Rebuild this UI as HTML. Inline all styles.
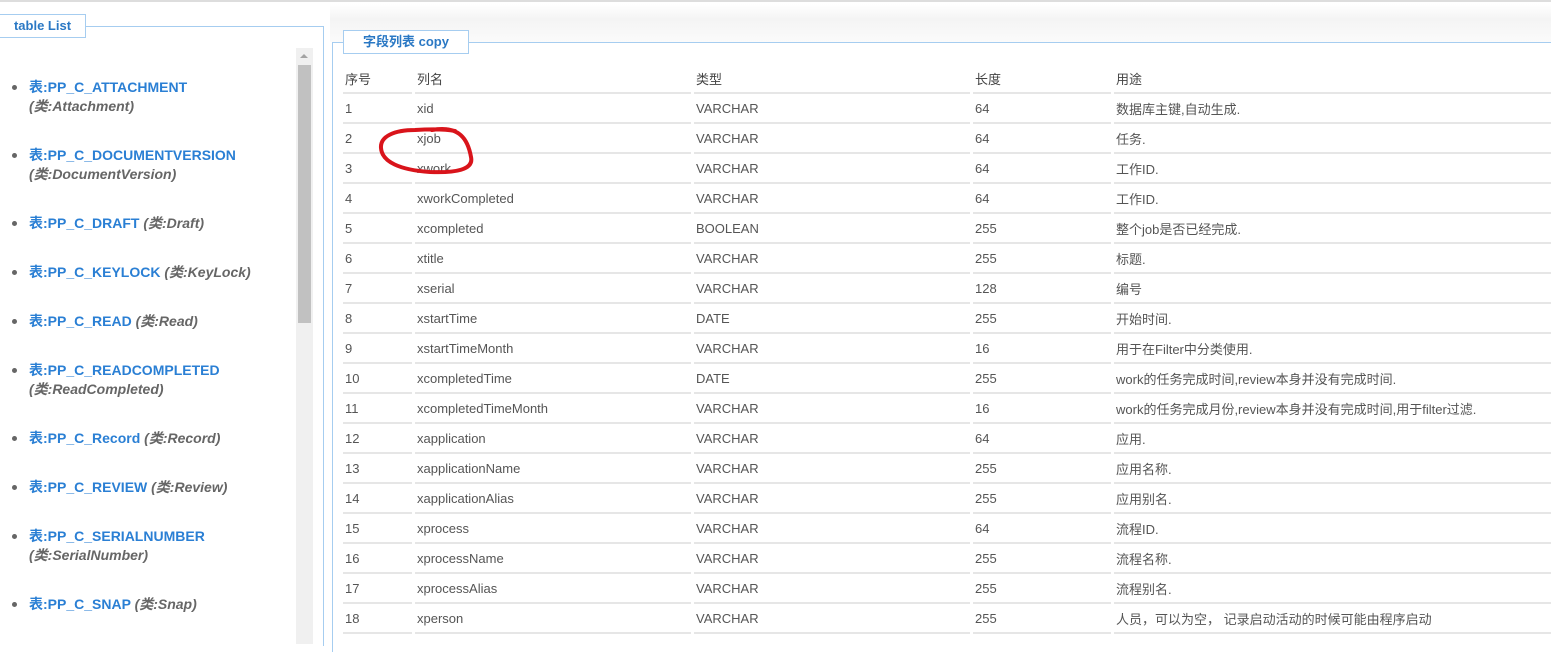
<!DOCTYPE html>
<html><head><meta charset="utf-8"><style>
*{margin:0;padding:0;box-sizing:border-box}
body{width:1551px;height:644px;overflow:hidden;background:#fff;position:relative;font-family:"Liberation Sans","Noto Sans CJK SC",sans-serif;color:#555}
.a{position:absolute}
.lg{position:absolute;border:1px solid #a6cdf0;background:#fff;color:#2a78c4;font-weight:bold;font-size:13px;text-align:center;line-height:21px}
.it{position:absolute;left:29px;font-size:14px;line-height:19px;font-weight:bold;color:#2a7fd4}
.it i{color:#666}
.it:before{content:"";position:absolute;left:-17px;top:7px;width:5px;height:5px;border-radius:50%;background:#666}
table{position:absolute;left:340px;top:64px;border-collapse:separate;border-spacing:3px 0;font-size:13px;color:#555;table-layout:fixed;width:1220px}
td{height:30px;border-bottom:2px solid #e6e6e6;padding-left:2px;white-space:nowrap;vertical-align:middle;overflow:hidden}
tr:first-child td{color:#444}
</style></head><body>
<div class="a" style="left:0;top:0;width:1551px;height:2px;background:#ddd"></div>
<div class="a" style="left:330px;top:4px;width:1221px;height:38px;background:linear-gradient(#fff,#f4f4f4 40%,#fbfbfb)"></div>
<div class="a" style="left:0;top:26px;width:324px;height:620px;border-top:1px solid #a6cdf0;border-right:1px solid #a6cdf0"></div>
<div class="lg" style="left:0;top:14px;width:86px;height:24px;border-left:none">table List</div>
<div class="a" style="left:296px;top:48px;width:17px;height:596px;background:#f0f0f0"></div>
<div class="a" style="left:298px;top:65px;width:13px;height:258px;background:#c1c1c1"></div>
<div class="a" style="left:300px;top:54px;width:0;height:0;border-left:4px solid transparent;border-right:4px solid transparent;border-bottom:4px solid #a3a3a3"></div>
<div class="it" style="top:78px">表:PP_C_ATTACHMENT<br><i>(类:Attachment)</i></div>
<div class="it" style="top:146px">表:PP_C_DOCUMENTVERSION<br><i>(类:DocumentVersion)</i></div>
<div class="it" style="top:214px">表:PP_C_DRAFT <i>(类:Draft)</i></div>
<div class="it" style="top:263px">表:PP_C_KEYLOCK <i>(类:KeyLock)</i></div>
<div class="it" style="top:312px">表:PP_C_READ <i>(类:Read)</i></div>
<div class="it" style="top:361px">表:PP_C_READCOMPLETED<br><i>(类:ReadCompleted)</i></div>
<div class="it" style="top:429px">表:PP_C_Record <i>(类:Record)</i></div>
<div class="it" style="top:478px">表:PP_C_REVIEW <i>(类:Review)</i></div>
<div class="it" style="top:527px">表:PP_C_SERIALNUMBER<br><i>(类:SerialNumber)</i></div>
<div class="it" style="top:595px">表:PP_C_SNAP <i>(类:Snap)</i></div>
<div class="a" style="left:332px;top:42px;width:1230px;height:610px;border-top:1px solid #a6cdf0;border-left:1px solid #a6cdf0"></div>
<div class="lg" style="left:343px;top:30px;width:126px;height:24px">字段列表 copy</div>
<table>
<colgroup><col style="width:69px"><col style="width:276px"><col style="width:276px"><col style="width:138px"><col style="width:446px"></colgroup>
<tr><td>序号</td><td>列名</td><td>类型</td><td>长度</td><td>用途</td></tr>
<tr><td>1</td><td>xid</td><td>VARCHAR</td><td>64</td><td>数据库主键,自动生成.</td></tr>
<tr><td>2</td><td>xjob</td><td>VARCHAR</td><td>64</td><td>任务.</td></tr>
<tr><td>3</td><td>xwork</td><td>VARCHAR</td><td>64</td><td>工作ID.</td></tr>
<tr><td>4</td><td>xworkCompleted</td><td>VARCHAR</td><td>64</td><td>工作ID.</td></tr>
<tr><td>5</td><td>xcompleted</td><td>BOOLEAN</td><td>255</td><td>整个job是否已经完成.</td></tr>
<tr><td>6</td><td>xtitle</td><td>VARCHAR</td><td>255</td><td>标题.</td></tr>
<tr><td>7</td><td>xserial</td><td>VARCHAR</td><td>128</td><td>编号</td></tr>
<tr><td>8</td><td>xstartTime</td><td>DATE</td><td>255</td><td>开始时间.</td></tr>
<tr><td>9</td><td>xstartTimeMonth</td><td>VARCHAR</td><td>16</td><td>用于在Filter中分类使用.</td></tr>
<tr><td>10</td><td>xcompletedTime</td><td>DATE</td><td>255</td><td>work的任务完成时间,review本身并没有完成时间.</td></tr>
<tr><td>11</td><td>xcompletedTimeMonth</td><td>VARCHAR</td><td>16</td><td>work的任务完成月份,review本身并没有完成时间,用于filter过滤.</td></tr>
<tr><td>12</td><td>xapplication</td><td>VARCHAR</td><td>64</td><td>应用.</td></tr>
<tr><td>13</td><td>xapplicationName</td><td>VARCHAR</td><td>255</td><td>应用名称.</td></tr>
<tr><td>14</td><td>xapplicationAlias</td><td>VARCHAR</td><td>255</td><td>应用别名.</td></tr>
<tr><td>15</td><td>xprocess</td><td>VARCHAR</td><td>64</td><td>流程ID.</td></tr>
<tr><td>16</td><td>xprocessName</td><td>VARCHAR</td><td>255</td><td>流程名称.</td></tr>
<tr><td>17</td><td>xprocessAlias</td><td>VARCHAR</td><td>255</td><td>流程别名.</td></tr>
<tr><td>18</td><td>xperson</td><td>VARCHAR</td><td>255</td><td>人员，可以为空， 记录启动活动的时候可能由程序启动</td></tr>
</table>
<svg class="a" style="left:0;top:0" width="1551" height="644"><path d="M432 130 C460 125 468 140 471 157 C474 170 455 173 430 172 C400 170 382 162 381 148 C380 136 395 130 415 130 C430 129 445 129 455 131" fill="none" stroke="#d9141b" stroke-width="4" stroke-linecap="round"/></svg>
</body></html>
